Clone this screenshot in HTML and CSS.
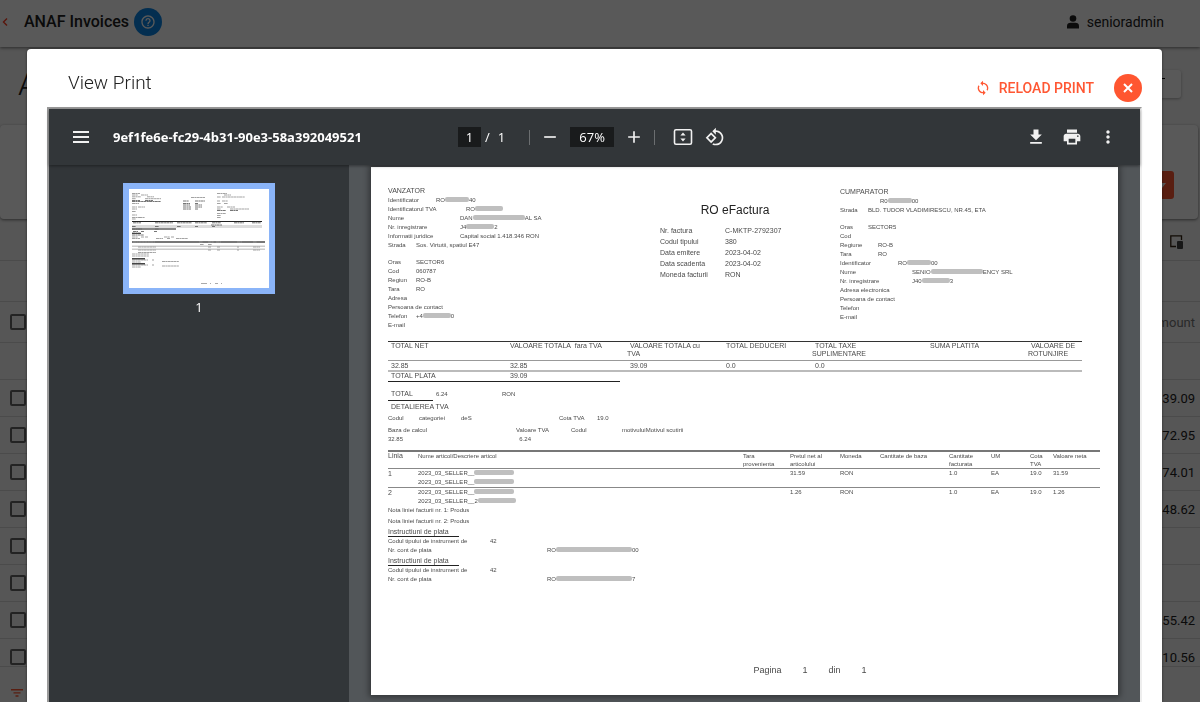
FILE: index.html
```html
<!DOCTYPE html>
<html lang="en">
<head>
  <meta charset="UTF-8">
  <title>ANAF Invoices</title>
  <link rel="stylesheet" href="styles.css">
</head>
<body>
  <div class="app">
    <header class="topbar">
      <button class="back-btn" aria-label="Back">
        <svg width="6" height="8" viewBox="0 0 6 8"><path d="M5 .5 1.500 4 5 7.500" fill="none" stroke="currentColor" stroke-width="1.400"/></svg>
      </button>
      <div class="app-title">ANAF Invoices</div>
      <button class="help-btn" aria-label="Help">
        <svg width="16" height="16" viewBox="0 0 24 24"><path fill="currentColor" d="M11 18h2v-2h-2v2zm1-16C6.480 2 2 6.480 2 12s4.480 10 10 10 10-4.480 10-10S17.520 2 12 2zm0 18c-4.410 0-8-3.590-8-8s3.590-8 8-8 8 3.590 8 8-3.590 8-8 8zm0-14c-2.210 0-4 1.790-4 4h2c0-1.100.9-2 2-2s2 .9 2 2c0 2-3 1.750-3 5h2c0-2.250 3-2.500 3-5 0-2.210-1.790-4-4-4z"/></svg>
      </button>
      <a class="user" href="#">
        <svg width="12" height="14" viewBox="0 0 12 14"><circle cx="6" cy="3.500" r="3.300" fill="currentColor"/><path d="M0 13.500V11c0-2 1.500-3.200 3.500-3.200h5c2 0 3.500 1.200 3.500 3.200v2.500z" fill="currentColor"/></svg>
        <span>senioradmin</span>
      </a>
    </header>

    <div class="page-head">
      <h1>A</h1>
      <button class="views-btn" aria-label="Views"><svg width="8" height="4" viewBox="0 0 8 4"><path d="M0 0h8v1H0z" fill="currentColor"/></svg></button>
    </div>

    <div class="filter-card">
      <button class="search-btn" aria-label="Search"><svg width="8" height="5" viewBox="0 0 8 5"><path d="M0 0h8L4 5z" fill="currentColor"/></svg></button>
    </div>

    <div class="grid-toolbar">
      <button class="columns-btn" aria-label="Column chooser">
        <svg width="14" height="14" viewBox="0 0 14 14"><path d="M6 11.500H.8V.8h10.700V5" fill="none" stroke="#321" stroke-width="1.300"/><rect x="7" y="6" width="6" height="8" rx="1" fill="#444"/></svg>
      </button>
    </div>
    <div class="group-panel"></div>

    <div class="grid-wrap">
      <table class="grid">
        <thead>
          <tr><th class="check"><input type="checkbox" aria-label="Select all"></th><th class="amount">Amount</th></tr>
          <tr class="row-filter"><td></td><td></td></tr>
        </thead>
        <tbody>
          <tr><td class="check"><input type="checkbox" aria-label="Select row"></td><td class="amount">39.09</td></tr>
          <tr><td class="check"><input type="checkbox" aria-label="Select row"></td><td class="amount">72.95</td></tr>
          <tr><td class="check"><input type="checkbox" aria-label="Select row"></td><td class="amount">74.01</td></tr>
          <tr><td class="check"><input type="checkbox" aria-label="Select row"></td><td class="amount">48.62</td></tr>
          <tr><td class="check"><input type="checkbox" aria-label="Select row"></td><td class="amount"></td></tr>
          <tr><td class="check"><input type="checkbox" aria-label="Select row"></td><td class="amount"></td></tr>
          <tr><td class="check"><input type="checkbox" aria-label="Select row"></td><td class="amount">55.42</td></tr>
          <tr><td class="check"><input type="checkbox" aria-label="Select row"></td><td class="amount">10.56</td></tr>
        </tbody>
      </table>
    </div>
    <div class="grid-footer">
      <button class="filter-btn" aria-label="Create filter">
        <svg width="12" height="8" viewBox="0 0 12 8"><path d="M0 0h12v1.400H0zM2.500 3.200h7v1.400h-7zM4.500 6.300h3v1.400h-3z" fill="currentColor"/></svg>
      </button>
    </div>
  </div>

  <div class="overlay">
    <section class="modal" role="dialog" aria-labelledby="modal-title">
      <header class="modal-head">
        <h2 id="modal-title">View Print</h2>
        <button class="reload-btn">
          <svg width="16" height="16" viewBox="0 0 24 24"><path fill="currentColor" d="M12 4V1L8 5l4 4V6c3.310 0 6 2.690 6 6 0 1.010-.25 1.970-.7 2.800l1.460 1.460C19.540 15.030 20 13.570 20 12c0-4.420-3.580-8-8-8zm0 14c-3.310 0-6-2.690-6-6 0-1.010.25-1.970.7-2.800L5.240 7.740C4.460 8.970 4 10.430 4 12c0 4.420 3.580 8 8 8v3l4-4-4-4v3z"/></svg>
          RELOAD PRINT
        </button>
        <button class="close-btn" aria-label="Close">
          <svg width="10" height="10" viewBox="0 0 10 10"><path d="M1 1l8 8M9 1L1 9" stroke="currentColor" stroke-width="2"/></svg>
        </button>
      </header>

      <div class="viewer">
        <div class="toolbar">
          <div class="tools-start">
            <button class="tool" aria-label="Menu"><svg width="24" height="24" viewBox="0 0 24 24"><path fill="currentColor" d="M4 18h16v-2H4zM4 13h16v-2H4zM4 6v2h16V6z"/></svg></button>
            <span class="doc-name">9ef1fe6e-fc29-4b31-90e3-58a392049521</span>
          </div>
          <div class="tools-center">
            <input class="page-input" type="text" value="1" aria-label="Page number">
            <span class="page-sep">/</span>
            <span class="page-count">1</span>
            <span class="divider"></span>
            <button class="tool" aria-label="Zoom out"><svg width="20" height="20" viewBox="0 0 24 24"><path fill="currentColor" d="M19 13H5v-2h14v2z"/></svg></button>
            <input class="zoom-input" type="text" value="67%" aria-label="Zoom level">
            <button class="tool" aria-label="Zoom in"><svg width="20" height="20" viewBox="0 0 24 24"><path fill="currentColor" d="M19 13h-6v6h-2v-6H5v-2h6V5h2v6h6v2z"/></svg></button>
            <span class="divider divider-wide"></span>
            <button class="tool" aria-label="Fit to page"><svg width="20" height="18" viewBox="0 0 20 18"><rect x="1.500" y="1.800" width="17" height="14.400" rx="1.500" fill="none" stroke="currentColor" stroke-width="1.600"/><path fill="currentColor" d="M10 4.500l2.600 3H7.400zM10 13.500l2.600-3H7.400z"/></svg></button>
            <button class="tool" aria-label="Rotate"><svg width="20" height="20" viewBox="0 0 24 24"><path fill="currentColor" d="M7.340 6.410L.86 12.900l6.490 6.480 6.490-6.480-6.500-6.490zM3.690 12.900l3.660-3.660L11 12.900l-3.660 3.660-3.650-3.660zm15.670-6.260C17.610 4.880 15.300 4 13 4V.76L8.760 5 13 9.240V6c1.790 0 3.580.68 4.950 2.050 2.730 2.730 2.730 7.170 0 9.900C16.580 19.320 14.790 20 13 20c-.97 0-1.940-.21-2.840-.61l-1.490 1.490C10.020 21.620 11.510 22 13 22c2.300 0 4.610-.88 6.360-2.640 3.520-3.510 3.520-9.210 0-12.720z"/></svg></button>
          </div>
          <div class="tools-end">
            <button class="tool" aria-label="Download"><svg width="20" height="20" viewBox="0 0 24 24"><path fill="currentColor" d="M19 9h-4V3H9v6H5l7 7 7-7zM5 18v2h14v-2H5z"/></svg></button>
            <button class="tool" aria-label="Print"><svg width="20" height="20" viewBox="0 0 24 24"><path fill="currentColor" d="M19 8H5c-1.660 0-3 1.340-3 3v6h4v4h12v-4h4v-6c0-1.660-1.340-3-3-3zm-3 11H8v-5h8v5zm3-7c-.55 0-1-.45-1-1s.45-1 1-1 1 .45 1 1-.45 1-1 1zm-1-9H6v4h12V3z"/></svg></button>
            <button class="tool" aria-label="More actions"><svg width="20" height="20" viewBox="0 0 24 24"><path fill="currentColor" d="M12 8c1.100 0 2-.9 2-2s-.9-2-2-2-2 .9-2 2 .9 2 2 2zm0 2c-1.100 0-2 .9-2 2s.9 2 2 2 2-.9 2-2-.9-2-2-2zm0 6c-1.100 0-2 .9-2 2s.9 2 2 2 2-.9 2-2-.9-2-2-2z"/></svg></button>
          </div>
        </div>

        <div class="viewer-body">
          <aside class="thumbs">
            <button class="thumb" aria-label="Page 1">
              <svg viewBox="0 0 140 99" width="140" height="99">
                <rect width="140" height="99" fill="#fff"/>
                <g fill="none" stroke="#999" stroke-width=".9">
                  <path stroke-dasharray="3 .4 2 .3" d="M3 4.500h8M3 6h6M12 6h7M3 7.800h9M18 7.800h7M3 9.700h4M16 9.700h16M3 14.500h7M3 18h5M9 18h7M3 20h5M3 22.500h4M3 26h5M3 28.500h9M10 28.500h6M3 30h4M88 4.500h10M95 6h7M88 8h4M93 8h23M88 12h3M93 12h6M88 14.500h4M95 14.500h4M88 18h6M98 18h8M88 20h4M101 20h19M88 24.500h9M88 26.500h4M88 28.500h4M62 8.500h14"/>
                  <path stroke="#666" stroke-dasharray="3 .4 2 .3" d="M3 11.500h8M16 11.500h8M3 12.500h29M54 12h6M66 12h10M54 14.500h7M66 14.500h3M54 16h7M66 16h7M54 18h8M66 18h7M54 20h8M66 20h3M88 21.500h9M101 21.500h8"/>
                </g>
                <path fill="#222" d="M3 32h130v1H3z"/>
                <path fill="#ddd" d="M3 36h130v3H3z"/>
                <path fill="#888" d="M3 39h44v2H3z"/>
                <path fill="#777" d="M3 52h133v2H3z"/>
                <path fill="#ccc" d="M3 56.500h133v1.500H3zM3 59.500h133v1.500H3z"/>
                <g fill="none" stroke="#666" stroke-width=".9" stroke-dasharray="3 .4 2 .3">
                  <path d="M4 33.800h8M26 33.800h18M48 33.800h15M66 33.800h12M83 33.800h9M105 33.800h10M123 33.800h9M82 36h11M3 37.500h4M26 37.500h4M48 37.500h4M66 37.500h3M83 37.500h3M3 40h10M26 40h4M4 42.500h5M12 42.500h3M25 42.500h3M3 44h9M3 46h12"/>
                  <path stroke="#999" d="M3 48h6M12 48h3M16 48h3M35 48h6M42 48h3M3 49.500h8M27 49.500h7M38 49.500h3M47 49.500h12M4 53h22M70 53h4M79 53h6M87 53h5M108 53h5M124 53h4M71 55.500h4M79 55.500h4M9 58h18M79 58h3M88 58h3M108 58h2M124 58h7M9 61h18M79 61h3M88 61h3M108 61h2M124 61h7M9 63.500h18M3 65h17M3 67h17M3 71h16M23 71h2M3 73h9M33 72.500h17M3 76h16M23 76h2M3 78h9M33 77h17"/>
                </g>
                <path fill="#444" d="M3 44h9v1H3zM3 69h13v1.500H3zM3 74h13v1.500H3z"/>
                <path stroke="#aaa" d="M72 94.500h6M81 94.500h1M86 94.500h3M92 94.500h1"/>
              </svg>
            </button>
            <div class="thumb-no">1</div>
          </aside>

          <main class="canvas">
            <article class="sheet">
              <div class="parties">
                <div class="party">
                  <h3>VANZATOR</h3>
                  <div><span class="tab tab-48">Identificator</span>RO<i class="mask mask-24"></i>40</div>
                  <div><span class="tab tab-78">Identificatorul TVA</span>RO<i class="mask mask-28"></i></div>
                  <div><span class="tab tab-72">Nume</span>DAN<i class="mask mask-52"></i>AL SA</div>
                  <div><span class="tab tab-72">Nr. inregistrare</span>J4<i class="mask mask-28"></i>2</div>
                  <div><span class="tab tab-72">Informatii juridice</span>Capital social 1.418.346 RON</div>
                  <div><span class="tab tab-28">Strada</span>Sos. Virtutii, spatiul E47</div>
                  <div class="gap"></div>
                  <div><span class="tab tab-28">Oras</span>SECTOR6</div>
                  <div><span class="tab tab-28">Cod</span>060787</div>
                  <div><span class="tab tab-28">Regiun</span>RO-B</div>
                  <div><span class="tab tab-28">Tara</span>RO</div>
                  <div>Adresa</div>
                  <div>Persoana de contact</div>
                  <div><span class="tab tab-28">Telefon</span>+4<i class="mask mask-28"></i>0</div>
                  <div>E-mail</div>
                </div>

                <div class="invoice-head">
                  <h2>RO eFactura</h2>
                  <div><span class="tab">Nr. factura</span>C-MKTP-2792307</div>
                  <div><span class="tab">Codul tipului</span>380</div>
                  <div><span class="tab">Data emitere</span>2023-04-02</div>
                  <div><span class="tab">Data scadenta</span>2023-04-02</div>
                  <div><span class="tab">Moneda facturii</span>RON</div>
                </div>

                <div class="party buyer">
                  <h3>CUMPARATOR</h3>
                  <div><span class="tab tab-40"></span>R0<i class="mask mask-24"></i>00</div>
                  <div><span class="tab tab-28">Strada</span>BLD. TUDOR VLADIMIRESCU, NR.45, ETA</div>
                  <div class="gap"></div>
                  <div><span class="tab tab-28">Oras</span>SECTOR5</div>
                  <div>Cod</div>
                  <div><span class="tab tab-38">Regiune</span>RO-B</div>
                  <div><span class="tab tab-38">Tara</span>RO</div>
                  <div><span class="tab tab-58">Identificator</span>RO<i class="mask mask-24"></i>00</div>
                  <div><span class="tab tab-72">Nume</span>SENIO<i class="mask mask-52"></i>ENCY SRL</div>
                  <div><span class="tab tab-72">Nr. inregistrare</span>J40<i class="mask mask-28"></i>3</div>
                  <div>Adresa electronica</div>
                  <div>Persoana de contact</div>
                  <div>Telefon</div>
                  <div>E-mail</div>
                </div>
              </div>

              <table class="totals">
                <colgroup><col class="c-119"><col class="c-120"><col class="c-96"><col class="c-89"><col class="c-115"><col class="c-101"><col></colgroup>
                <thead>
                  <tr><th>TOTAL NET</th><th>VALOARE TOTALA&nbsp; fara TVA</th><th>VALOARE TOTALA cu<br>TVA</th><th>TOTAL DEDUCERI</th><th>TOTAL TAXE<br>SUPLIMENTARE</th><th>SUMA PLATITA</th><th>VALOARE DE<br>ROTUNJIRE</th></tr>
                </thead>
                <tbody>
                  <tr><td>32.85</td><td>32.85</td><td>39.09</td><td>0.0</td><td>0.0</td><td></td><td></td></tr>
                </tbody>
              </table>
              <div class="total-due"><span>TOTAL PLATA</span><span>39.09</span></div>
              <div class="total-vat"><span class="total-label">TOTAL</span><span>6.24</span><span>RON</span></div>

              <h3 class="vat-title">DETALIEREA TVA</h3>
              <div class="vat-category"><span>Codul</span><span>categoriei</span><span>deS</span><span>Cota TVA</span><span>19.0</span></div>
              <div class="vat-base"><span>Baza de calcul</span><span>Valoare TVA</span><span>Codul</span><span>motivuluiMotivul scutirii</span></div>
              <div class="vat-base"><span>32.85</span><span>&nbsp; 6.24</span></div>

              <table class="items">
                <colgroup><col class="c-30"><col><col class="c-47"><col class="c-50"><col class="c-40"><col class="c-69"><col class="c-42"><col class="c-39"><col class="c-23"><col class="c-47"></colgroup>
                <thead>
                  <tr><th class="line-no">Linia</th><th>Nume articol/Descriere articol</th><th>Tara<br>provenienta</th><th>Pretul net al<br>articolului</th><th>Moneda</th><th>Cantitate de baza</th><th>Cantitate<br>facturata</th><th>UM</th><th>Cota<br>TVA</th><th>Valoare neta</th></tr>
                </thead>
                <tbody>
                  <tr><td class="line-no">1</td><td>2023_03_SELLER__<i class="mask mask-40"></i><br>2023_03_SELLER__<i class="mask mask-40"></i></td><td></td><td>31.59</td><td>RON</td><td></td><td>1.0</td><td>EA</td><td>19.0</td><td>31.59</td></tr>
                  <tr><td class="line-no">2</td><td>2023_03_SELLER__<i class="mask mask-40"></i><br>2023_03_SELLER__2<i class="mask mask-38"></i></td><td></td><td>1.26</td><td>RON</td><td></td><td>1.0</td><td>EA</td><td>19.0</td><td>1.26</td></tr>
                </tbody>
              </table>

              <div class="notes">
                <div>Nota liniei facturii nr. 1: Produs</div>
                <div>Nota liniei facturii nr. 2: Produs</div>
              </div>

              <h3 class="pay-title">Instructiuni de plata</h3>
              <div><span class="tab tab-102">Codul tipului de instrument de</span>42</div>
              <div><span class="tab tab-159">Nr. cont de plata</span>RO<i class="mask mask-76"></i>00</div>
              <h3 class="pay-title">Instructiuni de plata</h3>
              <div><span class="tab tab-102">Codul tipului de instrument de</span>42</div>
              <div><span class="tab tab-159">Nr. cont de plata</span>RO<i class="mask mask-76"></i>7</div>

              <footer class="sheet-foot"><span>Pagina</span><span>1</span><span>din</span><span>1</span></footer>
            </article>
          </main>
        </div>
      </div>
    </section>
  </div>
</body>
</html>
```

FILE: styles.css
```css
* { box-sizing: border-box; margin: 0; padding: 0; }
body {
  font-family: Roboto, "Liberation Sans", sans-serif;
  background: #f5f5f5;
  color: #212121;
  height: 100vh;
  overflow: hidden;
}
button {
  display: flex;
  align-items: center;
  justify-content: center;
  border: none;
  background: none;
  font-family: inherit;
  cursor: pointer;
}
svg { display: block; }

/* Invoice list behind the dialog */
.app {
  height: 100vh;
  display: flex;
  flex-direction: column;
}
.topbar {
  flex: none;
  height: 47px;
  display: flex;
  align-items: center;
  padding: 0 36px 4px 2px;
  background: #fff;
  box-shadow: 0 1px 3px rgba(0, 0, 0, 0.5);
}
.back-btn {
  color: #ff3d20;
}
.app-title {
  margin-left: 16px;
  font-size: 16px;
  font-weight: 500;
}
.help-btn {
  width: 28px;
  height: 28px;
  margin-left: 5px;
  border-radius: 50%;
  background: #0a84e4;
  color: #fff;
}
.user {
  display: flex;
  align-items: center;
  gap: 8px;
  margin-left: auto;
  font-size: 14px;
  color: #212121;
  text-decoration: none;
}
.page-head {
  flex: none;
  height: 78px;
  display: flex;
  align-items: center;
  justify-content: space-between;
  padding: 0 19px 4px 18px;
}
.page-head h1 {
  font-size: 32px;
  font-weight: 300;
}
.views-btn {
  width: 64px;
  height: 28px;
  padding: 0 16px 8px 0;
  justify-content: flex-end;
  border-radius: 3px;
  background: #fff;
  box-shadow: 0 1px 3px rgba(0, 0, 0, 0.3);
}
.filter-card {
  flex: none;
  height: 94px;
  margin-right: 2px;
  padding: 46px 24px 20px 0;
  border-radius: 4px;
  background: #fff;
  box-shadow: 0 1px 3px rgba(0, 0, 0, 0.5);
}
.search-btn {
  width: 64px;
  height: 28px;
  margin-left: auto;
  padding-right: 8px;
  justify-content: flex-end;
  border-radius: 3px;
  background: #ff5733;
  color: #fff;
}
.grid-toolbar {
  flex: none;
  height: 42px;
  display: flex;
  align-items: center;
  justify-content: flex-end;
  padding: 4px 16px 0 0;
  border-bottom: 1px solid #d6d6d6;
}
.group-panel {
  flex: none;
  height: 41px;
  border-bottom: 1px solid #d6d6d6;
}
.grid-wrap {
  flex: 1;
  min-height: 0;
  overflow: hidden;
}
.grid {
  width: 100%;
  border-spacing: 0;
  font-size: 13px;
}
.grid th, .grid td {
  height: 37px;
  border-bottom: 1px solid #d6d6d6;
}
.grid th {
  height: 41px;
  font-weight: 400;
  color: #777;
}
.grid .check {
  width: 40px;
  padding-left: 10px;
  text-align: left;
}
.grid .amount {
  padding-right: 5px;
  text-align: right;
}
.grid input {
  display: block;
  appearance: none;
  width: 16px;
  height: 16px;
  border: 2px solid #666;
  border-radius: 2px;
}
.grid-footer {
  flex: none;
  height: 36px;
  display: flex;
  align-items: center;
  padding: 16px 0 0 11px;
  border-top: 1px solid #d6d6d6;
}
.filter-btn {
  color: #ff5733;
}

/* Dialog */
.overlay {
  position: fixed;
  inset: 0;
  display: flex;
  padding: 49px 38px 0 27px;
  background: rgba(0, 0, 0, 0.65);
}
.modal {
  flex: 1;
  display: flex;
  flex-direction: column;
  min-width: 0;
  padding: 0 20px;
  border-radius: 4px 4px 0 0;
  background: #fff;
  box-shadow: 0 0 3px rgba(0, 0, 0, 0.5);
}
.modal-head {
  flex: none;
  display: flex;
  align-items: center;
  height: 58px;
  padding: 20px 0 0 21px;
}
.modal-head h2 {
  align-self: flex-start;
  margin-right: auto;
  font-size: 19px;
  line-height: 28px;
  font-weight: 300;
}
.reload-btn {
  gap: 8px;
  font-size: 14px;
  font-weight: 500;
  color: #ff5733;
}
.close-btn {
  width: 28px;
  height: 28px;
  margin-left: 20px;
  border-radius: 50%;
  background: #ff5630;
  color: #fff;
}

/* PDF viewer */
.viewer {
  flex: 1;
  min-height: 0;
  display: flex;
  flex-direction: column;
  border: 2px solid #9a9a9a;
  border-right-color: #eee;
  border-bottom: none;
  font-family: "Open Sans", "Noto Sans", sans-serif;
  font-size: 13px;
  color: #fff;
}
.toolbar {
  flex: none;
  display: grid;
  grid-template-columns: 1fr auto 1fr;
  align-items: center;
  height: 56px;
  background: #323639;
  box-shadow: 0 1px 3px rgba(0, 0, 0, 0.4);
  z-index: 1;
}
.tools-start, .tools-center, .tools-end {
  display: flex;
  align-items: center;
}
.tools-start {
  padding-left: 16px;
  gap: 16px;
}
.tools-end {
  justify-content: flex-end;
  gap: 4px;
  padding-right: 16px;
}
.doc-name {
  font-weight: 700;
  white-space: nowrap;
}
.tool {
  width: 32px;
  height: 32px;
  color: #f1f1f1;
}
.toolbar input {
  height: 20px;
  border: none;
  background: #191b1c;
  color: #fff;
  font: inherit;
  text-align: center;
}
.page-input { width: 23px; }
.zoom-input {
  width: 44px;
  margin: 0 4px;
}
.page-sep { margin-left: 4px; }
.page-count { margin-left: 8px; }
.divider {
  width: 1px;
  height: 15px;
  margin: 0 4px 0 24px;
  background: #6b6e70;
}
.divider-wide { margin: 0 12px 0 4px; }
.viewer-body {
  flex: 1;
  min-height: 0;
  display: flex;
}
.thumbs {
  flex: none;
  width: 300px;
  display: flex;
  flex-direction: column;
  align-items: center;
  padding-top: 18px;
  background: #323639;
}
.thumb {
  border: 6px solid #8ab4f8;
}
.thumb-no {
  margin-top: 4px;
  line-height: 18px;
}
.canvas {
  flex: 1;
  min-width: 0;
  padding: 2px 22px 0;
  overflow: hidden;
  background: #525659;
}

/* Invoice page */
.sheet {
  display: flex;
  flex-direction: column;
  aspect-ratio: 297 / 210;
  padding: 19px 18px 20px 17px;
  background: #fff;
  box-shadow: 0 0 6px 2px rgba(0, 0, 0, 0.4);
  color: #4a4a4a;
  font-family: "Liberation Sans", Arial, sans-serif;
  font-size: 6px;
  line-height: 9px;
}
.sheet h3, .sheet th {
  font-weight: 400;
  text-align: left;
}
.sheet h3 { font-size: 7px; }
.parties {
  display: grid;
  grid-template-columns: 272px 180px 1fr;
}
.party h3 { line-height: 10px; }
.buyer h3 { line-height: 11px; }
.gap { height: 8px; }
.tab {
  display: inline-block;
  white-space: nowrap;
}
.tab-28 { width: 28px; }
.tab-38 { width: 38px; }
.tab-40 { width: 40px; }
.tab-48 { width: 48px; }
.tab-58 { width: 58px; }
.tab-72 { width: 72px; }
.tab-78 { width: 78px; }
.tab-102 { width: 102px; }
.tab-159 { width: 159px; }
.mask {
  display: inline-block;
  height: 5px;
  border-radius: 2px;
  background: #bfbfbf;
}
.mask-24 { width: 24px; }
.mask-28 { width: 28px; }
.mask-38 { width: 38px; }
.mask-40 { width: 40px; }
.mask-52 { width: 52px; }
.mask-76 { width: 76px; }
.invoice-head {
  font-size: 7px;
  line-height: 11px;
}
.invoice-head h2 {
  width: 150px;
  margin: 15px 0 6px;
  font-size: 12px;
  line-height: 18px;
  font-weight: 400;
  text-align: center;
  color: #222;
}
.invoice-head .tab { width: 65px; }

.totals {
  width: 694px;
  margin-top: 11px;
  border-spacing: 0;
  border-top: 1px solid #333;
  table-layout: fixed;
  font-size: 7px;
}
.totals th {
  height: 19px;
  border-bottom: 1px solid #999;
  line-height: 8px;
}
.totals th, .totals td {
  vertical-align: top;
  text-indent: 3px;
  white-space: nowrap;
}
.totals td {
  height: 11px;
  border-bottom: 2px solid #bbb;
}
.c-23 { width: 23px; }
.c-30 { width: 30px; }
.c-39 { width: 39px; }
.c-40 { width: 40px; }
.c-42 { width: 42px; }
.c-47 { width: 47px; }
.c-50 { width: 50px; }
.c-69 { width: 69px; }
.c-89 { width: 89px; }
.c-96 { width: 96px; }
.c-101 { width: 101px; }
.c-115 { width: 115px; }
.c-119 { width: 119px; }
.c-120 { width: 120px; }
.total-due {
  display: grid;
  grid-template-columns: 119px 1fr;
  width: 232px;
  padding: 0 0 2px 3px;
  border-bottom: 1px solid #222;
  font-size: 7px;
  line-height: 7px;
}
.total-vat {
  display: grid;
  grid-template-columns: 48px 66px 1fr;
  margin-top: 6px;
  line-height: 12px;
}
.total-label {
  width: 45px;
  padding-left: 3px;
  border-bottom: 1px solid #222;
  font-size: 7px;
}
.vat-title {
  margin: 1px 0 2px;
  padding-left: 3px;
}
.vat-category {
  display: grid;
  grid-template-columns: 31px 42px 98px 38px 1fr;
  margin: 1px 0 3px;
}
.vat-base {
  display: grid;
  grid-template-columns: 128px 55px 51px 1fr;
}
.items {
  width: 100%;
  margin-top: 6px;
  border-spacing: 0;
  border-top: 2px solid #777;
  table-layout: fixed;
}
.items th {
  line-height: 8px;
}
.items th, .items td {
  vertical-align: top;
  white-space: nowrap;
}
.items th, .items tr:not(:last-child) td {
  border-bottom: 1px solid #888;
}
.items .line-no { font-size: 7px; }
.notes {
  display: grid;
  gap: 2px;
}
.pay-title {
  width: 71px;
  margin-top: 1px;
  border-bottom: 1px solid #222;
}
.sheet-foot {
  display: flex;
  justify-content: center;
  gap: 21px;
  margin-top: auto;
  padding-left: 132px;
  font-size: 9px;
  line-height: 10px;
}
```
